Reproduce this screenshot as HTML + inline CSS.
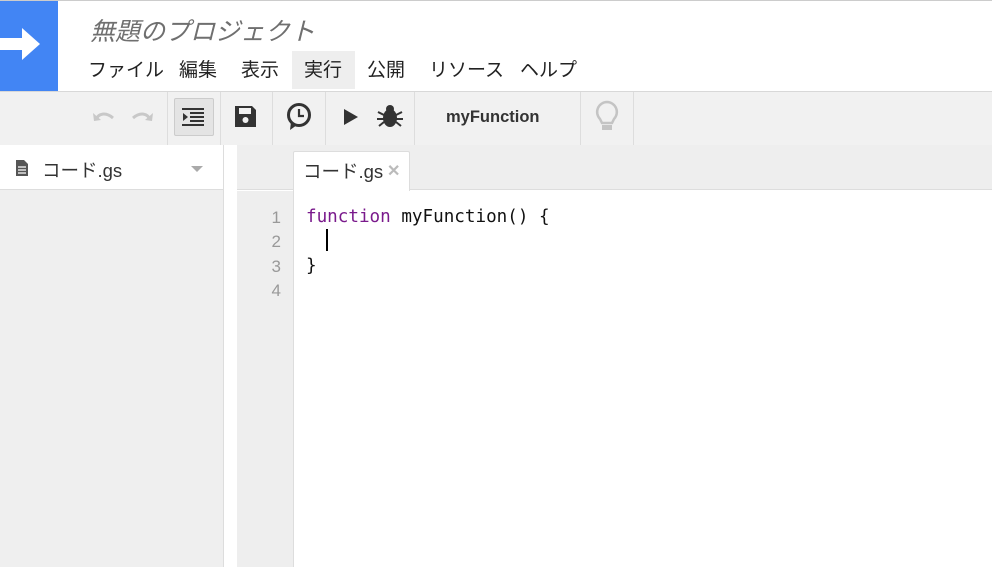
<!DOCTYPE html>
<html><head><meta charset="utf-8"><style>
*{margin:0;padding:0;box-sizing:border-box}
body{width:992px;height:567px;overflow:hidden;background:#fff;font-family:"Liberation Sans","Noto Sans CJK JP",sans-serif;position:relative}
.a{position:absolute}
</style></head><body>
<div class="a" style="left:0;top:0;width:992px;height:1px;background:#ccc"></div>
<div class="a" style="left:0;top:1px;width:58px;height:90px;background:#4285f4"></div>
<svg class="a" style="left:0;top:24px" width="42" height="40"><path d="M0 14H22V4L40 20L22 36V26H0Z" fill="#fff"/></svg>
<div class="a" style="left:90px;top:12px;font-size:25px;font-style:italic;color:#6f6f6f">無題のプロジェクト</div>
<div class="a" style="left:292px;top:51px;width:63px;height:38px;background:#eee"></div>
<div class="a" style="left:88px;top:55px;font-size:19px;color:#222;white-space:nowrap">
<span style="position:absolute;left:0">ファイル</span><span style="position:absolute;left:91px">編集</span><span style="position:absolute;left:153px">表示</span><span style="position:absolute;left:216px">実行</span><span style="position:absolute;left:279px">公開</span><span style="position:absolute;left:341px">リソース</span><span style="position:absolute;left:432px">ヘルプ</span></div>
<div class="a" style="left:0;top:91px;width:992px;height:1px;background:#d8d8d8"></div>
<div class="a" style="left:0;top:92px;width:992px;height:53px;background:#f1f1f1"></div>
<div class="a" style="left:167px;top:92px;width:1px;height:53px;background:#ddd"></div>
<div class="a" style="left:220px;top:92px;width:1px;height:53px;background:#ddd"></div>
<div class="a" style="left:272px;top:92px;width:1px;height:53px;background:#ddd"></div>
<div class="a" style="left:325px;top:92px;width:1px;height:53px;background:#ddd"></div>
<div class="a" style="left:414px;top:92px;width:1px;height:53px;background:#ddd"></div>
<div class="a" style="left:580px;top:92px;width:1px;height:53px;background:#ddd"></div>
<div class="a" style="left:633px;top:92px;width:1px;height:53px;background:#ddd"></div>
<svg class="a" style="left:92px;top:108px" width="62" height="16"><path d="M4 12C6 5 14 4 21 10" stroke="#c8c8c8" stroke-width="3" fill="none"/><path d="M1 5L2 13L9 12Z" fill="#c8c8c8"/><path d="M58 12C56 5 48 4 41 10" stroke="#c8c8c8" stroke-width="3" fill="none"/><path d="M61 5L60 13L53 12Z" fill="#c8c8c8"/></svg>
<div class="a" style="left:174px;top:98px;width:40px;height:38px;background:#e4e4e4;border:1px solid #ccc;border-radius:2px"></div>
<svg class="a" style="left:182px;top:108px" width="24" height="20"><g fill="#333"><rect x="0" y="0" width="22" height="2"/><rect x="8" y="4" width="14" height="2"/><rect x="8" y="8" width="14" height="2"/><rect x="8" y="12" width="14" height="2"/><rect x="0" y="16" width="22" height="2"/><path d="M1 5L6 9L1 13Z"/></g></svg>
<svg class="a" style="left:234px;top:105px" width="24" height="24"><path d="M1 1H18L22 5V22H1Z" fill="#333"/><rect x="5" y="3" width="12" height="6" fill="#f1f1f1"/><circle cx="11.5" cy="15" r="3" fill="#f1f1f1"/></svg>
<svg class="a" style="left:286px;top:102px" width="26" height="30"><circle cx="13" cy="13" r="10.5" stroke="#333" stroke-width="3" fill="none"/><path d="M13 7V14H18" stroke="#333" stroke-width="2.2" fill="none"/><path d="M5 20L4 28L11 23Z" fill="#333"/></svg>
<svg class="a" style="left:343px;top:108px" width="16" height="18"><path d="M1 1L15 9L1 17Z" fill="#333"/></svg>
<svg class="a" style="left:377px;top:104px" width="26" height="24"><g fill="#333"><ellipse cx="13" cy="14" rx="7" ry="9"/><circle cx="13" cy="5" r="4"/><path d="M1 8L7 11M25 8L19 11M0 15H7M26 15H19M2 22L7 18M24 22L19 18" stroke="#333" stroke-width="2"/></g></svg>
<div class="a" style="left:446px;top:108px;font-size:16.5px;font-weight:bold;color:#333">myFunction</div>
<svg class="a" style="left:594px;top:100px" width="26" height="34"><path d="M13 2A10 10 0 0 0 6 19L8 23H18L20 19A10 10 0 0 0 13 2Z" stroke="#c4c4c4" stroke-width="2.5" fill="none"/><rect x="8" y="25" width="10" height="5" fill="#c4c4c4"/></svg>
<div class="a" style="left:0;top:145px;width:223px;height:422px;background:#efefef"></div>
<div class="a" style="left:0;top:145px;width:223px;height:45px;background:#fff;border-bottom:1px solid #ddd"></div>
<div class="a" style="left:223px;top:145px;width:1px;height:422px;background:#ddd"></div>
<svg class="a" style="left:15px;top:159px" width="14" height="18"><path d="M1 1H9L13 5V17H1Z" fill="#555"/><g stroke="#fff" stroke-width="1.2"><path d="M3 8H11M3 11H11M3 14H11"/></g></svg>
<div class="a" style="left:42px;top:157px;font-size:18.5px;color:#333">コード.gs</div>
<svg class="a" style="left:191px;top:166px" width="12" height="7"><path d="M0 0H12L6 6Z" fill="#aaa"/></svg>
<div class="a" style="left:237px;top:145px;width:755px;height:45px;background:#eee;border-bottom:1px solid #ddd"></div>
<div class="a" style="left:293px;top:151px;width:117px;height:40px;background:#fff;border:1px solid #ddd;border-bottom:none;border-radius:2px 2px 0 0"></div>
<div class="a" style="left:303px;top:158px;font-size:18.5px;color:#333">コード.gs</div>
<div class="a" style="left:387px;top:161px;font-size:16px;color:#bbb;font-weight:bold">✕</div>
<div class="a" style="left:237px;top:191px;width:56px;height:376px;background:#eee"></div>
<div class="a" style="left:293px;top:191px;width:1px;height:376px;background:#ddd"></div>
<div class="a" style="left:258px;top:206px;font-family:'Liberation Sans',sans-serif;font-size:17px;line-height:24.3px;color:#999;text-align:right;width:23px">1<br>2<br>3<br>4</div>
<div class="a" style="left:306px;top:205px;font-family:'DejaVu Sans Mono','Liberation Mono',monospace;font-size:17.6px;line-height:24.3px;color:#111;white-space:pre"><span style="color:#7a1a8c">function</span> myFunction() {
  
}</div>
<div class="a" style="left:326px;top:229px;width:1.5px;height:22px;background:#000"></div>
</body></html>
